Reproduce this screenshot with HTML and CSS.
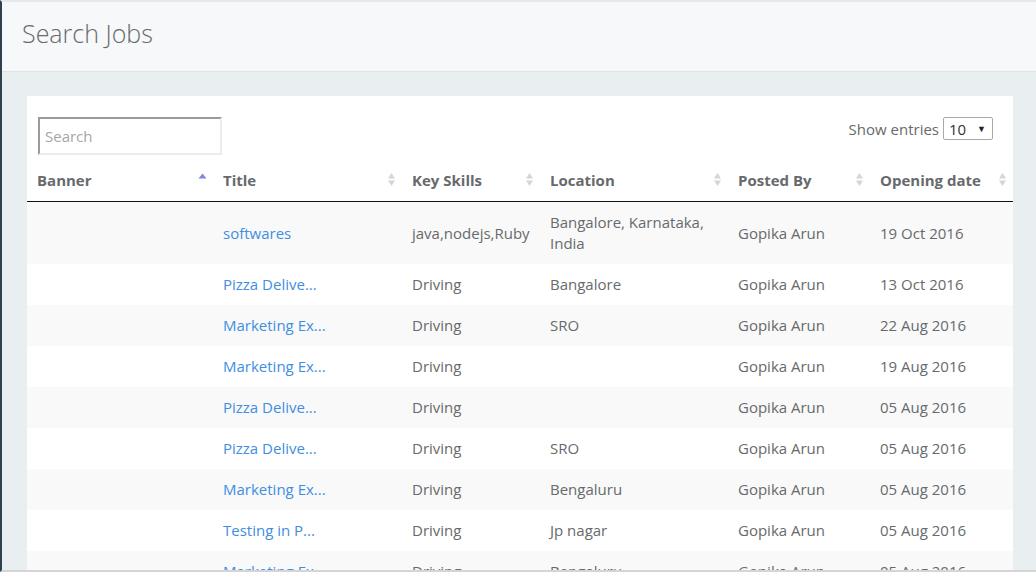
FILE: index.html
```html
<!DOCTYPE html>
<html>
<head>
<meta charset="utf-8">
<link rel="stylesheet" href="styles.css">
</head>
<body>
<div class="app">
  <header class="page-head">
    <h1 class="page-title">Search Jobs</h1>
  </header>
  <main class="content">
    <section class="panel">
      <div class="toolbar">
        <input class="search" type="text" placeholder="Search">
        <div class="length">
          <span class="length-label">Show entries</span>
          <div class="select"><span>10</span><span class="caret">▼</span></div>
        </div>
      </div>
      <table class="jobs">
        <colgroup>
          <col class="c-banner"><col class="c-title"><col class="c-skills"><col class="c-loc"><col class="c-post"><col class="c-date">
        </colgroup>
        <thead>
          <tr>
            <th><div class="th-in"><span>Banner</span><svg class="sort" width="9" height="15" viewBox="0 0 9 15"><path d="M4.5 1.5 L8.5 6.5 L0.5 6.5 Z" fill="#7f86dc"/></svg></div></th>
            <th><div class="th-in"><span>Title</span><svg class="sort" width="9" height="15" viewBox="0 0 9 15"><path d="M4.5 1 L8 6.5 L1 6.5 Z M4.5 14 L8 8.5 L1 8.5 Z" fill="#d6d6d6"/></svg></div></th>
            <th><div class="th-in"><span>Key Skills</span><svg class="sort" width="9" height="15" viewBox="0 0 9 15"><path d="M4.5 1 L8 6.5 L1 6.5 Z M4.5 14 L8 8.5 L1 8.5 Z" fill="#d6d6d6"/></svg></div></th>
            <th><div class="th-in"><span>Location</span><svg class="sort" width="9" height="15" viewBox="0 0 9 15"><path d="M4.5 1 L8 6.5 L1 6.5 Z M4.5 14 L8 8.5 L1 8.5 Z" fill="#d6d6d6"/></svg></div></th>
            <th><div class="th-in"><span>Posted By</span><svg class="sort" width="9" height="15" viewBox="0 0 9 15"><path d="M4.5 1 L8 6.5 L1 6.5 Z M4.5 14 L8 8.5 L1 8.5 Z" fill="#d6d6d6"/></svg></div></th>
            <th><div class="th-in"><span>Opening date</span><svg class="sort" width="9" height="15" viewBox="0 0 9 15"><path d="M4.5 1 L8 6.5 L1 6.5 Z M4.5 14 L8 8.5 L1 8.5 Z" fill="#d6d6d6"/></svg></div></th>
          </tr>
        </thead>
        <tbody>
          <tr><td></td><td><a href="#">softwares</a></td><td>java,nodejs,Ruby</td><td>Bangalore, Karnataka, India</td><td>Gopika Arun</td><td>19 Oct 2016</td></tr>
          <tr><td></td><td><a href="#">Pizza Delive...</a></td><td>Driving</td><td>Bangalore</td><td>Gopika Arun</td><td>13 Oct 2016</td></tr>
          <tr><td></td><td><a href="#">Marketing Ex...</a></td><td>Driving</td><td>SRO</td><td>Gopika Arun</td><td>22 Aug 2016</td></tr>
          <tr><td></td><td><a href="#">Marketing Ex...</a></td><td>Driving</td><td></td><td>Gopika Arun</td><td>19 Aug 2016</td></tr>
          <tr><td></td><td><a href="#">Pizza Delive...</a></td><td>Driving</td><td></td><td>Gopika Arun</td><td>05 Aug 2016</td></tr>
          <tr><td></td><td><a href="#">Pizza Delive...</a></td><td>Driving</td><td>SRO</td><td>Gopika Arun</td><td>05 Aug 2016</td></tr>
          <tr><td></td><td><a href="#">Marketing Ex...</a></td><td>Driving</td><td>Bengaluru</td><td>Gopika Arun</td><td>05 Aug 2016</td></tr>
          <tr><td></td><td><a href="#">Testing in P...</a></td><td>Driving</td><td>Jp nagar</td><td>Gopika Arun</td><td>05 Aug 2016</td></tr>
          <tr><td></td><td><a href="#">Marketing Ex...</a></td><td>Driving</td><td>Bengaluru</td><td>Gopika Arun</td><td>05 Aug 2016</td></tr>
        </tbody>
      </table>
    </section>
  </main>
</div>
</body>
</html>
```

FILE: styles.css
```css
html, body {
  margin: 0;
  padding: 0;
  height: 572px;
  overflow: hidden;
}
body {
  font-family: "Open Sans", "Liberation Sans", sans-serif;
  color: #676a6c;
  background: #e9eef1;
}
.app {
  box-sizing: border-box;
  height: 572px;
  overflow: hidden;
  border-left: 2px solid #2f4050;
  border-top: 2px solid #e6e9eb;
  border-bottom: 2px solid #d3d5d6;
  background: #e9eef1;
  display: flex;
  flex-direction: column;
}
.page-head {
  height: 69px;
  flex: none;
  background: #f6f8fa;
  border-bottom: 1px solid #dfe3e6;
  display: flex;
  align-items: center;
  padding-left: 20px;
}
.page-title {
  margin: 0;
  font-size: 25px;
  font-weight: 300;
  color: #676a6c;
  line-height: 1;
  position: relative;
  top: -3px;
}
.content {
  padding: 24px 23px 0 25px;
  flex: 1;
  min-height: 0;
}
.panel {
  background: #fff;
  height: 100%;
  padding-top: 21px;
  box-sizing: border-box;
}
.toolbar {
  display: flex;
  justify-content: space-between;
  align-items: flex-start;
  padding: 0 20px 0 11px;
}
.search {
  box-sizing: border-box;
  width: 184px;
  height: 38px;
  border-style: solid;
  border-width: 2px;
  border-color: #9a9a9a #ececec #ececec #9a9a9a;
  padding: 0 0 0 5px;
  font-family: inherit;
  font-size: 15px;
  color: #676a6c;
  outline: none;
  margin: 0;
}
.search::placeholder {
  color: #a6a6a6;
}
.length {
  display: flex;
  align-items: center;
  font-size: 15px;
}
.length-label {
  margin-right: 4px;
}
.select {
  box-sizing: border-box;
  width: 50px;
  height: 23px;
  border: 1px solid #a9a9a9;
  border-radius: 2px;
  display: flex;
  align-items: center;
  justify-content: space-between;
  padding: 0 6px 0 5px;
  font-size: 15px;
  color: #333;
}
.caret {
  font-size: 9px;
  color: #222;
}
.jobs {
  width: 100%;
  border-collapse: collapse;
  table-layout: fixed;
  margin-top: 4px;
  font-size: 15px;
}
.c-banner { width: 186px; }
.c-title { width: 189px; }
.c-skills { width: 138px; }
.c-loc { width: 188px; }
.c-post { width: 142px; }
.c-date { width: 143px; }
.jobs th {
  text-align: left;
  font-weight: 700;
  padding: 11px 6px 10px 10px;
  line-height: 21px;
  border-bottom: 1px solid #111;
  color: #676a6c;
}
.th-in {
  display: flex;
  justify-content: space-between;
  align-items: center;
}
.sort {
  display: block;
  flex: none;
  position: relative;
  top: -1px;
}
.jobs td {
  padding: 10px 10px;
  line-height: 21px;
  vertical-align: middle;
}
.jobs tbody tr:nth-child(odd) {
  background: #f9f9f9;
}
.jobs a {
  color: #3f8ee0;
  text-decoration: none;
}
```
